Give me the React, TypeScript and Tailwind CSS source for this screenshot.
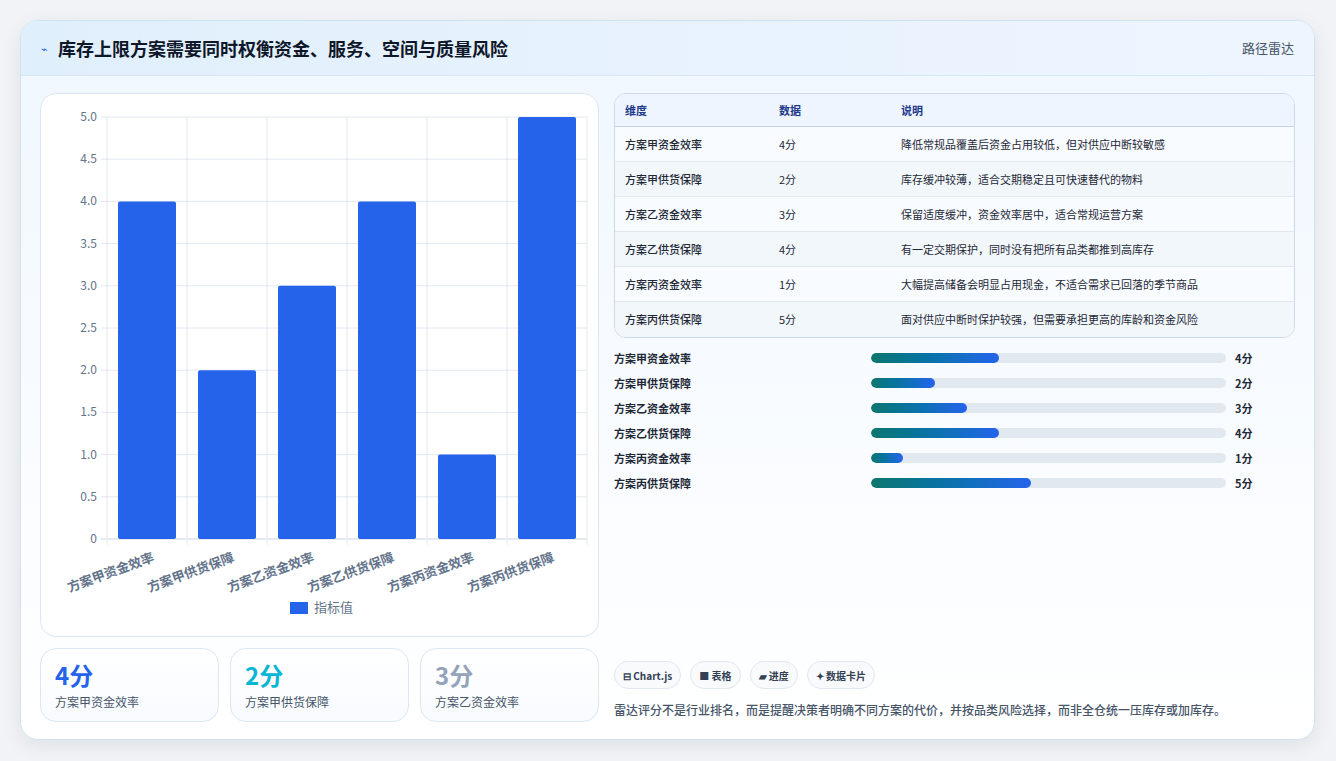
import React from 'react';

const rows = [
  { name: '方案甲资金效率', v: 4, note: '降低常规品覆盖后资金占用较低，但对供应中断较敏感' },
  { name: '方案甲供货保障', v: 2, note: '库存缓冲较薄，适合交期稳定且可快速替代的物料' },
  { name: '方案乙资金效率', v: 3, note: '保留适度缓冲，资金效率居中，适合常规运营方案' },
  { name: '方案乙供货保障', v: 4, note: '有一定交期保护，同时没有把所有品类都推到高库存' },
  { name: '方案丙资金效率', v: 1, note: '大幅提高储备会明显占用现金，不适合需求已回落的季节商品' },
  { name: '方案丙供货保障', v: 5, note: '面对供应中断时保护较强，但需要承担更高的库龄和资金风险' },
];

const font = { fontFamily: '"Noto Sans CJK SC", "Noto Sans", sans-serif' };

const BarChart = () => {
  const x0 = 66, x1 = 546, yTop = 23, yBot = 445;
  const step = (x1 - x0) / 6;
  const ticks = ['0', '0.5', '1.0', '1.5', '2.0', '2.5', '3.0', '3.5', '4.0', '4.5', '5.0'];
  return (
    <svg width="558" height="543" viewBox="0 0 558 543" style={font}>
      {ticks.map((t, i) => {
        const y = yBot - (i * (yBot - yTop)) / 10;
        return (
          <g key={t}>
            <line x1={x0 - 6} x2={x1} y1={y} y2={y} stroke={i === 0 ? '#cbd5e1' : '#e2e8f0'} />
            <text x={x0 - 10} y={y + 4} textAnchor="end" fontSize="12" fill="#64748b">{t}</text>
          </g>
        );
      })}
      {Array.from({ length: 7 }).map((_, i) => (
        <line key={i} x1={x0 + i * step} x2={x0 + i * step} y1={yTop} y2={yBot + 6} stroke="#e2e8f0" />
      ))}
      {rows.map((r, i) => {
        const h = (r.v / 5) * (yBot - yTop);
        const cx = x0 + step * i + step / 2;
        return (
          <g key={r.name}>
            <rect x={cx - 29} y={yBot - h} width="58" height={h} rx="2" fill="#2563eb" />
            <text
              x={cx + 8}
              y={yBot + 22}
              textAnchor="end"
              fontSize="13"
              fontWeight="600"
              fill="#64748b"
              transform={`rotate(-20 ${cx + 8} ${yBot + 22})`}
            >
              {r.name}
            </text>
          </g>
        );
      })}
      <rect x="249" y="508" width="18" height="12" fill="#2563eb" />
      <text x="273" y="518" fontSize="13" fill="#64748b">指标值</text>
    </svg>
  );
};

const Kpi = ({ value, label, color }: { value: string; label: string; color: string }) => (
  <div className="flex-1 rounded-2xl border border-[#dbe7f5] bg-gradient-to-b from-white to-[#f8fbff] px-[14px] pt-[10px] h-[74px]">
    <div className={`text-[24px] font-bold leading-[32px] ${color}`}>{value}</div>
    <div className="text-[12px] text-[#475569] mt-[2px]">{label}</div>
  </div>
);

export default function App() {
  return (
    <div className="w-[1336px] h-[761px] bg-[#f1f3f6] pt-[20px] px-[20px]" style={font}>
      <div className="w-[1295px] h-[720px] rounded-[18px] border border-[#cfe4f3] bg-gradient-to-b from-[#f0f7ff] to-white shadow-[0_6px_20px_rgba(15,23,42,0.08)] overflow-hidden flex flex-col">
        <div className="h-[55px] shrink-0 flex items-center justify-between px-[20px] bg-gradient-to-r from-[#e0effc] to-[#eef5ff] border-b border-[#d6e6f5]">
          <div className="flex items-center gap-[10px]">
            <span className="text-[11px] text-[#2563eb]">⌁</span>
            <h1 className="text-[18px] font-bold text-[#0f172a]">库存上限方案需要同时权衡资金、服务、空间与质量风险</h1>
          </div>
          <span className="text-[13px] text-[#475569]">路径雷达</span>
        </div>
        <div className="flex gap-[15px] px-[19px] pt-[17px]">
          <div className="w-[559px] flex flex-col gap-[11px]">
            <div className="h-[544px] rounded-2xl border border-[#dbe7f5] bg-white overflow-hidden">
              <BarChart />
            </div>
            <div className="flex gap-[11px]">
              <Kpi value="4分" label="方案甲资金效率" color="text-[#2563eb]" />
              <Kpi value="2分" label="方案甲供货保障" color="text-[#06b6d4]" />
              <Kpi value="3分" label="方案乙资金效率" color="text-[#94a3b8]" />
            </div>
          </div>
          <div className="w-[684px] flex flex-col">
            <div className="rounded-xl border border-[#cbd9ea] overflow-hidden bg-white">
              <div className="flex h-[33px] items-center bg-[#eef5ff] border-b border-[#cbd5e1] text-[11px] font-semibold text-[#1e3a8a]">
                <div className="w-[164px] pl-[10px]">维度</div>
                <div className="w-[122px]">数据</div>
                <div className="flex-1">说明</div>
              </div>
              {rows.map((r, i) => (
                <div
                  key={r.name}
                  className={`flex h-[35px] items-center text-[11px] text-[#1f2937] ${i < rows.length - 1 ? 'border-b border-[#e2e8f0]' : ''} ${i % 2 === 0 ? 'bg-[#f8fbff]' : 'bg-[#f2f7fc]'}`}
                >
                  <div className="w-[164px] pl-[10px] font-medium">{r.name}</div>
                  <div className="w-[122px]">{r.v}分</div>
                  <div className="flex-1">{r.note}</div>
                </div>
              ))}
            </div>
            <div className="flex flex-col gap-[9px] mt-[12px]">
              {rows.map((r) => (
                <div key={r.name} className="flex items-center h-[16px] text-[11px] font-semibold text-[#1f2937]">
                  <div className="w-[257px]">{r.name}</div>
                  <div className="w-[355px] h-[10px] rounded-full bg-[#e2e8f0] overflow-hidden">
                    <div
                      className="h-full rounded-full bg-gradient-to-r from-[#0f766e] to-[#2563eb]"
                      style={{ width: `${r.v * 9}%` }}
                    />
                  </div>
                  <div className="ml-[9px]">{r.v}分</div>
                </div>
              ))}
            </div>
            <div className="flex gap-[9px] mt-[170px]">
              {['⊟ Chart.js', '■ 表格', '▰ 进度', '✦ 数据卡片'].map((c) => (
                <span key={c} className="h-[28px] px-[8px] flex items-center rounded-full border border-[#e2e8f0] bg-[#f8fafc] text-[10px] font-semibold text-[#334155]">
                  {c}
                </span>
              ))}
            </div>
            <p className="mt-[12px] text-[12px] font-medium text-[#475569]">
              雷达评分不是行业排名，而是提醒决策者明确不同方案的代价，并按品类风险选择，而非全仓统一压库存或加库存。
            </p>
          </div>
        </div>
      </div>
    </div>
  );
}
